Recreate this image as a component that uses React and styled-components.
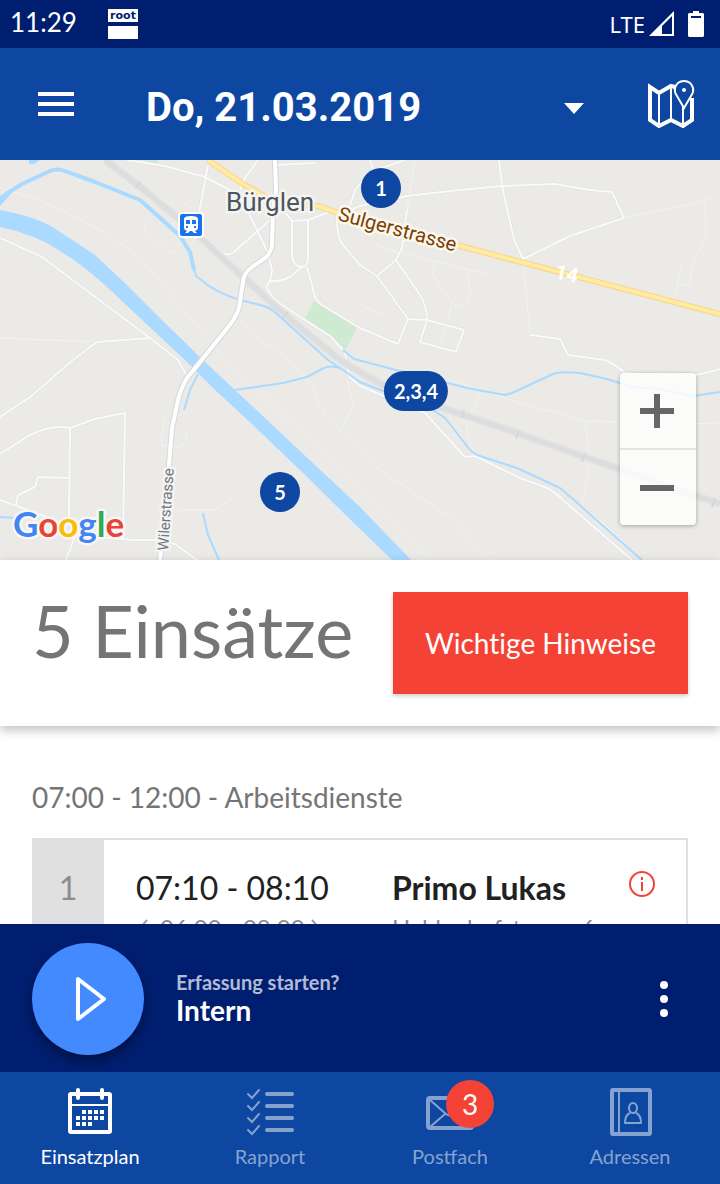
import { useState } from "react";
import styled, { createGlobalStyle } from "styled-components";

const GlobalStyle = createGlobalStyle`
  * {
    box-sizing: border-box;
  }
  body {
    margin: 0;
    background: #ffffff;
    font-family: Lato, "Open Sans", sans-serif;
  }
  button,
  select {
    margin: 0;
    padding: 0;
    border: 0;
    background: none;
    font-family: inherit;
    cursor: pointer;
  }
  svg {
    display: block;
    flex: none;
  }
`;

const pins = [
  { label: "1", x: 381, y: 28 },
  { label: "2,3,4", x: 416, y: 231 },
  { label: "5", x: 280, y: 332 },
];

const streets = [
  "M127 0L165 6L205 17L230 30L243 42L257 70L268 93L272 110L270 121L266 127L275 140L305 160L330 176L345 192L349 216",
  "M208 5L199 53L203 75L222 93Q228 96 234 92L270 60",
  "M258 0L245 18L240 30M275 5L315 3",
  "M283 50L292 61L308 60L335 50",
  "M292 61V95Q293 107 302 107Q308 106 308 98V60",
  "M302 107L290 117Q280 122 270 121",
  "M307 107L312 125Q314 140 322 145L360 168L398 184L408 159L377 116L360 105L342 84Q336 74 337 52",
  "M377 116L396 100L402 88L407 50",
  "M396 100L420 135Q427 146 427 160L408 159M427 160L464 170L456 192L420 182L427 160",
  "M350 50L360 46L407 36L450 31L502 26L555 24L590 30L612 32L624 58L570 76L523 99L514 80L502 26L499 0",
  "M350 45L355 30L370 12L405 0M370 0L374 12",
  "M530 175L560 179L568 195L605 200Q618 206 625 213L690 216L705 213L720 209",
  "M0 78L42 97L150 178L178 200L187 216",
  "M150 178L97 182L73 200L30 237L0 257",
  "M0 294L30 275Q52 264 70 268L95 259L125 253L123 379",
  "M70 268L69 360M70 318L38 317L35 327L18 335L16 345",
  "M0 340L50 358M66 400L75 376L90 377L135 380H158L175 384L197 400",
  "M349 216L360 226L425 253L465 297L475 296L520 318L547 328Q555 332 563 340L632 400",
  "M583 347L610 370L642 400",
];

const paths = [
  "M624 58L682 46L715 38M705 40L706 80L694 100L689 125H677L674 138M677 125L682 104",
  "M415 0L407 50M523 99L528 155L530 175M452 143Q460 148 467 145L471 134L468 119L470 109M435 100L433 115L452 143",
  "M376 85L400 93L486 114M452 143L440 185M360 145L380 154L386 145",
  "M0 28Q80 50 140 98L215 188L390 360L430 400M97 182L0 178",
  "M448 219L517 242L550 251L585 261L720 264M585 261L590 300L582 347",
  "M480 234L467 262Q466 280 475 293M287 200L307 217L325 255L341 272L353 244L347 220",
  "M164 257L161 285L180 287L186 280V272M178 350H215L238 334M341 272L380 310L450 357L490 400",
  "M240 160L252 175L272 188L290 200M175 36L185 44L192 41M146 60L144 70L172 94L183 80",
];

const canals = [
  "M190 92L194 108Q195 117 200 119Q214 132 240 140L260 145Q270 147 277 154L328 200L343 210L360 222L383 231L433 250L445 258L460 277L470 290L477 295L517 308L547 322L560 328L582 347L642 400",
  "M235 230L283 223L307 217L322 209Q332 204 342 209",
  "M343 190L354 199L400 211L448 223L467 228L505 235L512 233L553 214Q560 211 580 213L607 219L632 227L660 229L693 236L720 232",
  "M198 214L190 230L184 250M203 353L208 375L219 400M0 357L15 358M158 400L160 392",
];

const TownMap = () => (
  <MapDrawing viewBox="0 0 720 400" preserveAspectRatio="xMidYMid slice" aria-hidden="true">
    <rect width="720" height="400" fill="#ebeae7" />
    <path d="M314 141L357 167L346 190L304 160ZM146 0H158V4L146 3Z" fill="#ceead0" />
    <g fill="none" strokeLinejoin="round">
      {paths.map((d) => (
        <path key={d} d={d} stroke="#f1f2f2" strokeWidth="1" />
      ))}
      {streets.map((d) => (
        <path key={d} d={d} stroke="#dfe1e4" strokeWidth="3" />
      ))}
      {streets.map((d) => (
        <path key={d} d={d} stroke="#fafafa" strokeWidth="2" />
      ))}
      <path
        d="M105 0L138 25L190 68L243 117L285 155L340 200L360 212L385 226L440 247L520 274L585 297L720 344"
        stroke="#e3e3e2"
        strokeWidth="8"
      />
      <path
        d="M105 0L138 25L190 68L243 117L285 155L340 200L360 212L385 226L440 247L520 274L585 297L720 344"
        stroke="#dcddde"
        strokeWidth="5"
      />
      <path
        d="M135 28L141 22M282 158L288 152M464 250L462 258M519 270L516 279M585 293L582 302M715 338L712 347"
        stroke="#d5d7da"
        strokeWidth="2"
      />
      <path
        d="M0 40L8 33L22 24L50 11Q57 8 65 11L95 22L140 40L158 56L180 76L190 92L194 110"
        stroke="#aadaff"
        strokeWidth="4"
      />
      {canals.map((d) => (
        <path key={d} d={d} stroke="#aadaff" strokeWidth="2" />
      ))}
    </g>
    <path
      d="M0 50Q40 57 60 72L95 95L130 128L165 163L203 200L235 230L300 291L360 347L411 400H392L360 369L302 312L253 265L213 228L185 200L140 158L105 125Q80 103 60 91Q35 74 0 67ZM29 0H40L34 4H29Z"
      fill="#aadaff"
    />
    <path d="M0 36L10 29L10 35L0 46Z" fill="#aadaff" />
    <g fill="none" strokeLinejoin="round">
      <path d="M208 0L240 22L267 38L290 43L318 46L335 52L460 86L720 154" stroke="#f8d586" strokeWidth="6" />
      <path d="M208 0L240 22L267 38L290 43L318 46L335 52L460 86L720 154" stroke="#ffeba3" strokeWidth="4" />
      <path
        d="M275 0L276 30L273 50L272 85Q271 93 265 98L252 107Q243 114 243 122L239 148Q236 158 225 171L200 202L187 218Q181 228 178 240L172 268L169 305L167 340L160 400"
        stroke="#d5d8dc"
        strokeWidth="6"
      />
      <path
        d="M275 0L276 30L273 50L272 85Q271 93 265 98L252 107Q243 114 243 122L239 148Q236 158 225 171L200 202L187 218Q181 228 178 240L172 268L169 305L167 340L160 400"
        stroke="#ffffff"
        strokeWidth="4"
      />
    </g>
    <rect x="178" y="52" width="26" height="26" rx="4" fill="#ffffff" />
    <rect x="180" y="54" width="22" height="22" rx="2" fill="#1a73e8" />
    <path
      d="M184 59Q184 56 191 56T198 59V68Q198 70 195 71L197 73H194L192 71H190L188 73H185L187 71Q184 70 184 68Z"
      fill="#ffffff"
    />
    <path d="M186 60H190V64H186ZM192 60H196V64H192ZM186 66H188V68H186ZM194 66H196V68H194Z" fill="#1a73e8" />
    <MapText x="226" y="51" size={26} fill="#4c5760" halo="#f5f4f2">
      Bürglen
    </MapText>
    <MapText x="337" y="60" size={20} fill="#7c3e04" halo="#fdf8ee" transform="rotate(15 337 60)">
      Sulgerstrasse
    </MapText>
    <MapText x="554" y="118" size={20} weight={700} fill="#ffffff" halo="none" transform="rotate(13 554 118)">
      14
    </MapText>
    <MapText x="168" y="391" size={15} fill="#6c7880" halo="#f5f4f2" transform="rotate(-86 168 391)">
      Wilerstrasse
    </MapText>
    <GoogleText x="13" y="377">
      <tspan fill="#4285f4">G</tspan>
      <tspan fill="#ea4335">o</tspan>
      <tspan fill="#fbbc05">o</tspan>
      <tspan fill="#4285f4">g</tspan>
      <tspan fill="#34a853">l</tspan>
      <tspan fill="#ea4335">e</tspan>
    </GoogleText>
  </MapDrawing>
);

const MapIcon = () => (
  <svg width="48" height="48" viewBox="0 0 48 48" fill="none" stroke="#ffffff">
    <path d="M27 7L23 6L11 13L2 7V40L11 46L23 40L35 46L44 40V18" strokeWidth="4" />
    <path d="M11 12V45M23 6V40M35 27V45" strokeWidth="2" />
    <path d="M36 28L29 16Q26 12 27 8Q29 1 36 1T45 8Q46 12 43 16Z" fill="#0d47a1" strokeWidth="2" />
    <circle cx="36" cy="10" r="2" fill="#ffffff" stroke="none" />
  </svg>
);

const CalendarIcon = () => (
  <svg width="48" height="48" viewBox="0 0 48 48" fill="none" stroke="currentColor">
    <rect x="4" y="6" width="40" height="38" rx="1" strokeWidth="4" />
    <path d="M4 17H44" strokeWidth="2" />
    <path d="M12 2V10M36 2V10" strokeWidth="4" strokeLinecap="round" />
    <path d="M16 24H38M10 30H38M10 36H26" strokeWidth="4" strokeDasharray="4 2" />
  </svg>
);

const ListIcon = () => (
  <svg width="48" height="48" viewBox="0 0 48 48" fill="none" stroke="currentColor" strokeLinecap="round">
    <path d="M21 6H46M21 18H46M21 30H46M21 42H46" strokeWidth="4" />
    <path
      d="M2 6L6 10L13 2M2 18L6 22L13 14M2 30L6 34L13 26M2 42L6 46L13 38"
      strokeWidth="2"
    />
  </svg>
);

const MailIcon = () => (
  <svg width="48" height="48" viewBox="0 0 48 48" fill="none" stroke="currentColor">
    <rect x="2" y="10" width="44" height="30" rx="2" strokeWidth="4" />
    <path d="M4 12L20 26Q24 29 28 26L44 12M4 39L19 26M44 39L29 26" strokeWidth="2" />
  </svg>
);

const ContactsIcon = () => (
  <svg width="48" height="48" viewBox="0 0 48 48" fill="none" stroke="currentColor">
    <rect x="6" y="2" width="38" height="44" rx="1" strokeWidth="4" />
    <path d="M13 3V45" strokeWidth="2" />
    <ellipse cx="27" cy="20" rx="4" ry="5" strokeWidth="2" />
    <path d="M24 25Q19 27 19 35H35Q35 27 30 25" strokeWidth="2" strokeLinejoin="round" />
  </svg>
);

const tabs = [
  { label: "Einsatzplan", Icon: CalendarIcon },
  { label: "Rapport", Icon: ListIcon },
  { label: "Postfach", Icon: MailIcon, badge: 3 },
  { label: "Adressen", Icon: ContactsIcon },
];

const App = () => {
  const [active, setActive] = useState("Einsatzplan");

  return (
    <Screen>
      <GlobalStyle />
      <StatusBar>
        <Clock>11:29</Clock>
        <RootNotice>
          <RootLabel>root</RootLabel>
          <RootBlock />
        </RootNotice>
        <Network>LTE</Network>
        <svg width="26" height="26" viewBox="0 0 26 26">
          <path d="M0 25L25 0V25ZM13 15V23H23V5Z" fill="#ffffff" fillRule="evenodd" />
        </svg>
        <Battery width="16" height="26" viewBox="0 0 16 26">
          <path d="M5 0H11V2H15L16 3V25L15 26H1L0 25V3L1 2H5ZM3 5V7H13V5Z" fill="#ffffff" fillRule="evenodd" />
        </Battery>
      </StatusBar>
      <Header>
        <IconButton aria-label="Menü">
          <svg width="36" height="24" viewBox="0 0 36 24">
            <path d="M0 0H36V4H0ZM0 10H36V14H0ZM0 20H36V24H0Z" fill="#ffffff" />
          </svg>
        </IconButton>
        <DatePicker>
          <DateSelect aria-label="Datum">
            <option>Do, 21.03.2019</option>
          </DateSelect>
          <Caret width="20" height="11" viewBox="0 0 20 11">
            <path d="M0 0H20L10 11Z" fill="#ffffff" />
          </Caret>
        </DatePicker>
        <IconButton aria-label="Karte">
          <MapIcon />
        </IconButton>
      </Header>
      <Content>
        <MapArea>
          <TownMap />
          {pins.map((pin) => (
            <Pin key={pin.label} $x={pin.x} $y={pin.y}>
              {pin.label}
            </Pin>
          ))}
          <ZoomControls>
            <ZoomButton aria-label="Vergrössern">
              <svg width="34" height="34" viewBox="0 0 34 34">
                <path d="M14 0H20V14H34V20H20V34H14V20H0V14H14Z" fill="#666666" />
              </svg>
            </ZoomButton>
            <ZoomDivider />
            <ZoomButton aria-label="Verkleinern">
              <svg width="34" height="34" viewBox="0 0 34 34">
                <path d="M0 14H34V20H0Z" fill="#666666" />
              </svg>
            </ZoomButton>
          </ZoomControls>
        </MapArea>
        <Summary>
          <Title>5 Einsätze</Title>
          <NoticeButton>Wichtige Hinweise</NoticeButton>
        </Summary>
        <Schedule>
          <SlotTitle>07:00 - 12:00 - Arbeitsdienste</SlotTitle>
          <Card>
            <CardNumber>1</CardNumber>
            <CardTimes>
              <CardMain>07:10 - 08:10</CardMain>
              <CardSub>
                <svg width="24" height="24" viewBox="0 0 24 24" fill="none" stroke="#9e9e9e" strokeWidth="2">
                  <path d="M11 4L4 12L11 20" />
                </svg>
                06:00 - 08:00
                <svg width="16" height="24" viewBox="0 0 16 24" fill="none" stroke="#9e9e9e" strokeWidth="2">
                  <path d="M7 4L14 12L7 20" />
                </svg>
              </CardSub>
            </CardTimes>
            <CardPerson>
              <CardMain $bold>Primo Lukas</CardMain>
              <CardSub>Haldenhofstrasse 6</CardSub>
            </CardPerson>
            <InfoButton aria-label="Information">
              <svg width="26" height="26" viewBox="0 0 26 26" fill="none" stroke="#f44336" strokeWidth="2">
                <circle cx="13" cy="13" r="12" />
                <path d="M13 11V20M13 6V9" />
              </svg>
            </InfoButton>
          </Card>
        </Schedule>
      </Content>
      <Recorder>
        <PlayButton aria-label="Erfassung starten">
          <svg width="32" height="46" viewBox="0 0 32 46">
            <path d="M3 3V43L29 23Z" fill="none" stroke="#ffffff" strokeWidth="4" strokeLinejoin="round" />
          </svg>
        </PlayButton>
        <RecorderText>
          <RecorderHint>Erfassung starten?</RecorderHint>
          <RecorderName>Intern</RecorderName>
        </RecorderText>
        <IconButton aria-label="Mehr">
          <svg width="48" height="48" viewBox="0 0 48 48" fill="#ffffff">
            <circle cx="24" cy="10" r="4" />
            <circle cx="24" cy="24" r="4" />
            <circle cx="24" cy="38" r="4" />
          </svg>
        </IconButton>
      </Recorder>
      <TabBar>
        {tabs.map(({ label, Icon, badge }) => (
          <Tab key={label} $active={active === label} onClick={() => setActive(label)}>
            <TabIcon>
              <Icon />
              {badge && <Badge>{badge}</Badge>}
            </TabIcon>
            {label}
          </Tab>
        ))}
      </TabBar>
    </Screen>
  );
};

const Screen = styled.div`
  display: flex;
  flex-direction: column;
  height: 100vh;
`;

const StatusBar = styled.div`
  display: flex;
  align-items: center;
  flex: none;
  height: 48px;
  padding: 0 16px 0 10px;
  background: #001e70;
  color: #ffffff;
`;

const Clock = styled.span`
  width: 68px;
  height: 48px;
  font-size: 26px;
  line-height: 44px;
`;

const RootNotice = styled.span`
  display: flex;
  flex-direction: column;
  gap: 4px;
  width: 30px;
  margin-left: 30px;
  margin-right: auto;
`;

const RootLabel = styled.span`
  height: 13px;
  background: #ffffff;
  color: #001e70;
  font: bold 11px/13px "DejaVu Sans", sans-serif;
  text-align: center;
`;

const RootBlock = styled.span`
  height: 13px;
  background: #ffffff;
`;

const Network = styled.span`
  margin-right: 4px;
  font: 22px/48px "Noto Sans", sans-serif;
`;

const Battery = styled.svg`
  margin-left: 13px;
`;

const Header = styled.header`
  display: flex;
  align-items: center;
  flex: none;
  height: 112px;
  padding: 0 24px 0 32px;
  background: #0d47a1;
`;

const IconButton = styled.button`
  display: grid;
  place-items: center;
  flex: none;
  width: 48px;
  height: 48px;
`;

const DatePicker = styled.div`
  display: grid;
  align-items: center;
  flex: 1;
  padding-top: 8px;
  margin: 0 64px 0 66px;
`;

const DateSelect = styled.select`
  grid-area: 1 / 1;
  appearance: none;
  height: 56px;
  color: #ffffff;
  font: bold 40px/56px Roboto, sans-serif;
`;

const Caret = styled.svg`
  grid-area: 1 / 1;
  justify-self: end;
  pointer-events: none;
`;

const Content = styled.main`
  flex: 1;
  min-height: 0;
  overflow-y: auto;
  scrollbar-width: none;
`;

const MapArea = styled.section`
  position: relative;
  height: 400px;
  overflow: hidden;
`;

const MapDrawing = styled.svg`
  width: 100%;
  height: 100%;
`;

const MapText = styled.text`
  font-family: Roboto, sans-serif;
  font-size: ${(props) => props.size}px;
  font-weight: ${(props) => props.weight || 400};
  stroke: ${(props) => props.halo};
  stroke-width: 5px;
  stroke-linejoin: round;
  paint-order: stroke;
`;

const GoogleText = styled.text`
  font-family: Lato, sans-serif;
  font-size: 35px;
  font-weight: 700;
  stroke: #f8f7f5;
  stroke-width: 5px;
  stroke-linejoin: round;
  paint-order: stroke;
`;

const Pin = styled.button`
  position: absolute;
  left: calc(50% + ${(props) => props.$x - 360}px);
  top: ${(props) => props.$y}px;
  transform: translate(-50%, -50%);
  min-width: 40px;
  height: 40px;
  padding: 0 10px;
  border-radius: 20px;
  background: #0d47a1;
  color: #ffffff;
  font-size: 20px;
  font-weight: 700;
  line-height: 40px;
`;

const ZoomControls = styled.div`
  position: absolute;
  right: 24px;
  bottom: 35px;
  width: 76px;
  border-radius: 4px;
  background: rgba(255, 255, 255, 0.8);
  box-shadow: 0 1px 4px rgba(0, 0, 0, 0.3);
`;

const ZoomButton = styled.button`
  display: grid;
  place-items: center;
  width: 100%;
  height: 75px;
  padding-right: 2px;
`;

const ZoomDivider = styled.div`
  height: 2px;
  background: #e3e3e1;
`;

const Summary = styled.section`
  position: relative;
  display: flex;
  align-items: flex-start;
  justify-content: space-between;
  padding: 32px;
  background: #ffffff;
  box-shadow: 0 4px 10px rgba(0, 0, 0, 0.25);
`;

const Title = styled.h1`
  margin: 0;
  color: #757575;
  font-size: 72px;
  font-weight: 400;
  line-height: 76px;
`;

const NoticeButton = styled.button`
  height: 102px;
  padding: 0 32px;
  background: #f44336;
  box-shadow: 0 2px 4px rgba(0, 0, 0, 0.2);
  color: #ffffff;
  font-size: 28px;
  font-variant-ligatures: none;
`;

const Schedule = styled.section`
  padding: 52px 32px 32px;
`;

const SlotTitle = styled.h2`
  margin: 0 0 22px;
  color: #757575;
  font-size: 28px;
  font-weight: 400;
  line-height: 38px;
`;

const Card = styled.article`
  display: flex;
  border: 2px solid #e0e0e0;
  border-left: 0;
`;

const CardNumber = styled.div`
  width: 72px;
  padding-top: 28px;
  background: #e0e0e0;
  color: #8c8c8c;
  font-size: 32px;
  line-height: 40px;
  text-align: center;
`;

const CardTimes = styled.div`
  width: 256px;
  padding: 28px 0 28px 32px;
`;

const CardPerson = styled.div`
  flex: 1;
  padding: 28px 0 28px 32px;
`;

const CardMain = styled.div`
  color: #212121;
  font-size: 32px;
  font-weight: ${(props) => (props.$bold ? 700 : 400)};
  line-height: 40px;
  white-space: nowrap;
`;

const CardSub = styled.div`
  display: flex;
  align-items: center;
  margin-top: 4px;
  color: #8c8c8c;
  font-size: 24px;
  line-height: 32px;
  white-space: nowrap;
`;

const InfoButton = styled.button`
  align-self: flex-start;
  margin: 31px 31px 0 0;
`;

const Recorder = styled.section`
  display: flex;
  align-items: center;
  flex: none;
  height: 148px;
  padding: 2px 32px 0;
  background: #001e70;
`;

const PlayButton = styled.button`
  display: grid;
  place-items: center;
  width: 112px;
  height: 112px;
  padding-left: 6px;
  border-radius: 50%;
  background: #448aff;
  box-shadow: 0 6px 12px rgba(0, 0, 0, 0.4);
`;

const RecorderText = styled.div`
  flex: 1;
  padding: 0 0 2px 32px;
`;

const RecorderHint = styled.div`
  color: #b2bbd4;
  font-size: 20px;
  font-weight: 700;
  line-height: 24px;
`;

const RecorderName = styled.div`
  color: #ffffff;
  font-size: 28px;
  font-weight: 700;
  line-height: 32px;
`;

const TabBar = styled.nav`
  display: grid;
  grid-template-columns: repeat(4, 1fr);
  flex: none;
  height: 112px;
  background: #0d47a1;
`;

const Tab = styled.button`
  display: flex;
  flex-direction: column;
  align-items: center;
  gap: 8px;
  padding-top: 16px;
  color: ${(props) => (props.$active ? "#ffffff" : "#86a3d0")};
  font-size: 20px;
  line-height: 24px;
`;

const TabIcon = styled.span`
  position: relative;
`;

const Badge = styled.span`
  position: absolute;
  left: 20px;
  top: -8px;
  width: 48px;
  height: 48px;
  border-radius: 50%;
  background: #f44336;
  color: #ffffff;
  font-size: 28px;
  line-height: 48px;
  text-align: center;
`;

export default App;
